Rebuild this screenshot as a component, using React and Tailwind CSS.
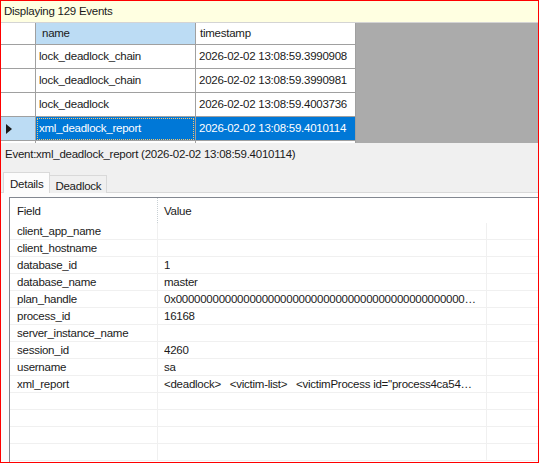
import React from "react"

const events = [
  { name: "lock_deadlock_chain", ts: "2026-02-02 13:08:59.3990908" },
  { name: "lock_deadlock_chain", ts: "2026-02-02 13:08:59.3990981" },
  { name: "lock_deadlock", ts: "2026-02-02 13:08:59.4003736" },
  { name: "xml_deadlock_report", ts: "2026-02-02 13:08:59.4010114", selected: true },
]

const fields = [
  ["client_app_name", ""],
  ["client_hostname", ""],
  ["database_id", "1"],
  ["database_name", "master"],
  ["plan_handle", "0x" + "0".repeat(120)],
  ["process_id", "16168"],
  ["server_instance_name", ""],
  ["session_id", "4260"],
  ["username", "sa"],
  ["xml_report", '<deadlock>   <victim-list>   <victimProcess id="process4ca5470b8c8" taskpriority="0" logused="0"'],
  ["", ""],
  ["", ""],
  ["", ""],
  ["", ""],
]

const EventRow = ({ ev }) => (
  <div className="flex h-[24px] border-b border-[#a0a0a0] whitespace-nowrap">
    <div
      className={`w-[35px] shrink-0 border-r border-[#a0a0a0] flex items-center pl-[5px] ${
        ev.selected ? "bg-[#bcdcf4]" : "bg-white"
      }`}
    >
      {ev.selected && (
        <svg width="6" height="10" viewBox="0 0 6 10">
          <path d="M0 0 L6 5 L0 10 Z" fill="#1a1a1a" />
        </svg>
      )}
    </div>
    <div
      className={`w-[160px] shrink-0 border-r border-[#a0a0a0] flex items-center px-[1px] ${
        ev.selected ? "bg-[#0078d7] text-white" : "bg-white"
      }`}
    >
      <span
        className={`flex-1 h-[22px] flex items-center pl-[2px] ${
          ev.selected ? "outline-1 outline-dotted outline-[#f7c36a] -outline-offset-1" : ""
        }`}
      >
        {ev.name}
      </span>
    </div>
    <div
      className={`w-[160px] shrink-0 border-r border-[#a0a0a0] flex items-center pl-[3px] ${
        ev.selected ? "bg-[#0078d7] text-white" : "bg-white"
      }`}
    >
      {ev.ts}
    </div>
  </div>
)

export default function App() {
  return (
    <div
      className="w-[539px] h-[463px] border border-[#ff0000] flex flex-col overflow-hidden text-[11.5px] tracking-[-0.25px] text-[#1a1a1a]"
      style={{ fontFamily: '"Liberation Sans", Arial, sans-serif' }}
    >
      {/* status bar */}
      <div className="h-[22px] shrink-0 bg-[#ffffe1] border-b border-[#d4d4d4] flex items-center pl-[3px]">
        Displaying 129 Events
      </div>

      {/* events grid */}
      <div className="h-[120px] shrink-0 bg-[#ababab] overflow-hidden">
        <div className="w-[355px] bg-white">
          <div className="flex h-[22px] border-b border-[#a0a0a0]">
            <div className="w-[35px] shrink-0 border-r border-[#a0a0a0] bg-white" />
            <div className="w-[160px] shrink-0 border-r border-[#a0a0a0] bg-[#bcdcf4] flex items-center pl-[6px]">
              name
            </div>
            <div className="w-[160px] shrink-0 border-r border-[#a0a0a0] bg-white flex items-center pl-[4px]">
              timestamp
            </div>
          </div>
          {events.map((ev, i) => (
            <EventRow key={i} ev={ev} />
          ))}
          <div className="h-[4px] flex">
            <div className="w-[35px] border-r border-[#a0a0a0]" />
            <div className="w-[160px] border-r border-[#a0a0a0]" />
            <div className="w-[160px] border-r border-[#a0a0a0]" />
          </div>
        </div>
      </div>

      {/* details panel */}
      <div className="flex-1 bg-[#f0f0f0] flex flex-col">
        <div className="h-[24px] flex items-center pl-[4px] whitespace-nowrap">
          Event:xml_deadlock_report (2026-02-02 13:08:59.4010114)
        </div>
        <div className="h-[5px]" />
        <div className="flex items-end h-[21px] pl-[2px] relative z-10 whitespace-nowrap">
          <div className="h-[21px] px-[6px] pt-[3px] bg-[#fcfcfc] border border-[#d9d9d9] border-b-0 flex items-start">
            Details
          </div>
          <div className="h-[18px] px-[5px] pt-[2px] bg-[#f0f0f0] border border-[#d9d9d9] border-l-0 border-b-0 flex items-start">
            Deadlock
          </div>
        </div>
        <div className="flex-1 border-t border-[#d9d9d9] bg-[#fcfcfc] -mt-px pl-[8px] pt-[4px] flex">
          <div className="flex-1 bg-white border-l border-t border-[#828790] overflow-hidden">
            <div className="flex h-[25px]">
              <div className="w-[148px] shrink-0 border-r border-dotted border-[#c8d0d4] pl-[7px] pt-[3px] flex items-center">
                Field
              </div>
              <div className="w-[329px] shrink-0 pl-[6px] pt-[3px] flex items-center">Value</div>
              <div className="flex-1" />
            </div>
            {fields.map(([k, v], i) => (
              <div key={i} className="flex h-[17px] border-b border-[#f0f0f0]">
                <div className="w-[148px] shrink-0 border-r border-[#f0f0f0] pl-[7px] pt-[2px] flex items-center whitespace-nowrap">
                  {k}
                </div>
                <div className="w-[329px] shrink-0 border-r border-[#f0f0f0] pl-[6px] pr-[9px] pt-[2px] flex items-center min-w-0">
                  <span className="truncate whitespace-pre">{v}</span>
                </div>
                <div className="flex-1" />
              </div>
            ))}
          </div>
        </div>
      </div>
    </div>
  )
}
